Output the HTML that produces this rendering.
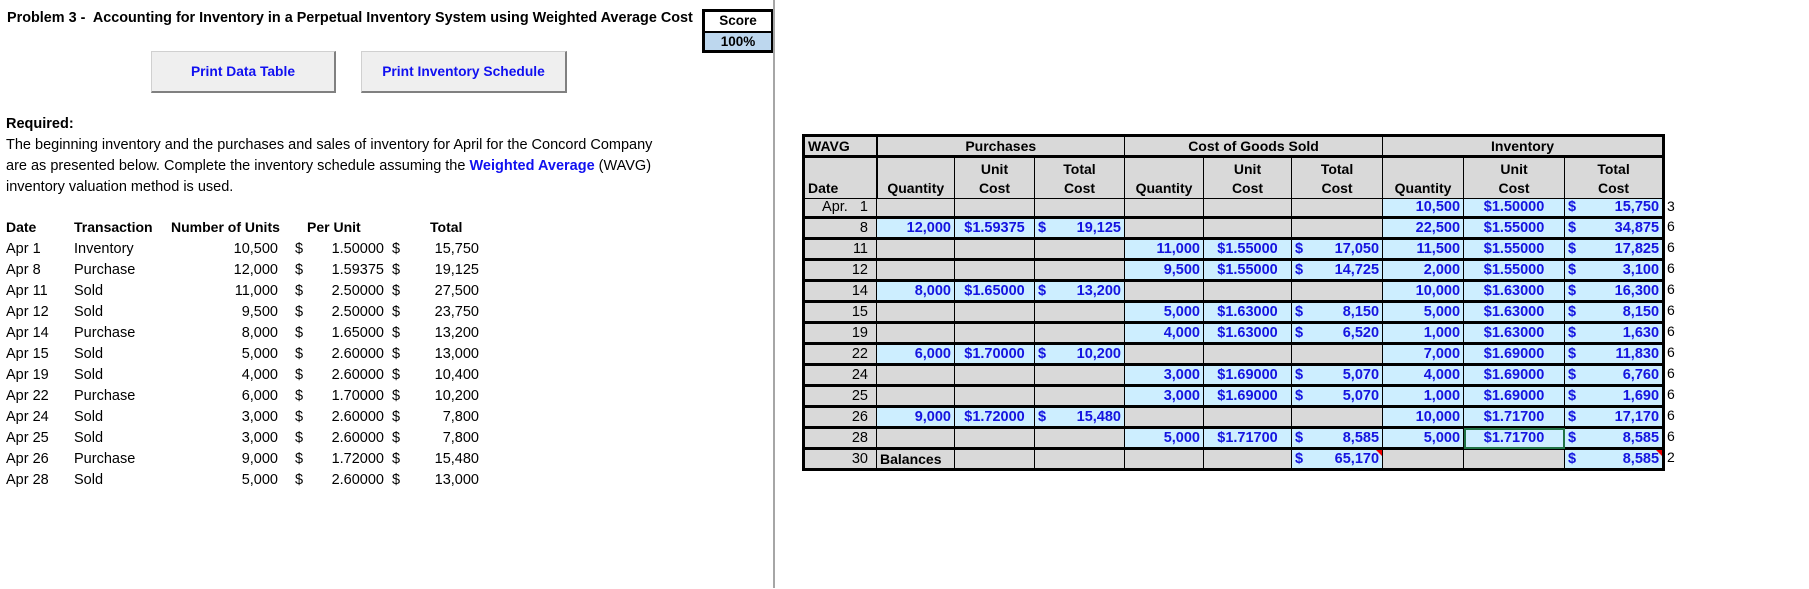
<!DOCTYPE html>
<html><head><meta charset="utf-8"><style>
*{margin:0;padding:0;box-sizing:border-box}
body{width:1809px;height:589px;background:#fff;position:relative;overflow:hidden;font-family:"Liberation Sans",Arial,sans-serif;color:#000}
.a{position:absolute;white-space:nowrap}
.title{left:7px;top:10px;font-size:14.4px;font-weight:bold}
.score{left:702px;top:9px;width:72px;height:44px;border:3px solid #000;font-size:13.5px;font-weight:bold;text-align:center}
.score div{height:19px;line-height:18px}
.score div+div{border-top:2px solid #000;background:#bdd7ee}
.vline{left:773px;top:0;width:2px;height:588px;background:#a6a6a6}
.btn{top:51px;height:42px;background:#efefef;border:1px solid #d0d0d0;border-right:2px solid #808080;border-bottom:2px solid #808080;color:#1010f0;font-weight:bold;font-size:13.8px;text-align:center;line-height:40px}
.req{left:6px;font-size:14.5px}
.dt{font-size:14.5px}
.dt.h{font-weight:bold;font-size:14px}
table{position:absolute;left:802px;top:134px;border-collapse:collapse;table-layout:fixed;width:860px;border:3px solid #000;font-size:14px}
td{border:1px solid #000;background:#d9d9d9;padding:0 3px;white-space:nowrap;overflow:hidden;position:relative;line-height:15px}
tr.t td{border-top:3px solid #000}
.hd td{font-weight:bold;text-align:center;vertical-align:bottom;font-size:14px;line-height:19px}
.hd1 td{vertical-align:middle;line-height:15px}
td.d{text-align:right;padding-right:8px;font-size:14.5px}
td.b{background:#cdeeff;color:#1414e0;font-weight:bold;text-align:right;font-size:14.5px}
td.c{text-align:center}
.dl{float:left}
.tri{position:absolute;right:0;top:0;width:0;height:0;border-left:6px solid transparent;border-top:6px solid #e00}
.sel{outline:2px solid #217346;outline-offset:-2px}
.rn{left:1667px;font-size:14px}
</style></head><body>
<div class="a title">Problem 3 -&nbsp; Accounting for Inventory in a Perpetual Inventory System using Weighted Average Cost</div>
<div class="a score"><div>Score</div><div>100%</div></div>
<div class="a vline"></div>
<div class="a btn" style="left:151px;width:185px">Print Data Table</div>
<div class="a btn" style="left:361px;width:206px">Print Inventory Schedule</div>
<div class="a req" style="top:116px;font-weight:bold">Required:</div>
<div class="a req" style="top:137px">The beginning inventory and the purchases and sales of inventory for April for the Concord Company</div>
<div class="a req" style="top:158px">are as presented below. Complete the inventory schedule assuming the <b style="color:#1010f0">Weighted Average</b> (WAVG)</div>
<div class="a req" style="top:179px">inventory valuation method is used.</div>

<div class="a dt h" style="left:6px;top:219px">Date</div>
<div class="a dt h" style="left:74px;top:219px">Transaction</div>
<div class="a dt h" style="left:171px;top:219px">Number of Units</div>
<div class="a dt h" style="left:307px;top:219px">Per Unit</div>
<div class="a dt h" style="left:430px;top:219px">Total</div>

<table>
<colgroup><col style="width:73px"><col style="width:78px"><col style="width:80px"><col style="width:90px"><col style="width:79px"><col style="width:88px"><col style="width:91px"><col style="width:81px"><col style="width:101px"><col style="width:99px"></colgroup>
<tr class="hd hd1" style="height:21px"><td style="text-align:left;border-right:2px solid #000">WAVG</td><td colspan="3">Purchases</td><td colspan="3">Cost of Goods Sold</td><td colspan="3">Inventory</td></tr>
<tr class="hd t" style="height:42px"><td style="text-align:left;border-right:2px solid #000">Date</td><td>Quantity</td><td>Unit<br>Cost</td><td>Total<br>Cost</td><td>Quantity</td><td>Unit<br>Cost</td><td>Total<br>Cost</td><td>Quantity</td><td>Unit<br>Cost</td><td>Total<br>Cost</td></tr>
<tr style="height:19px"><td class="d">Apr.&nbsp;&nbsp;&nbsp;1</td><td></td><td></td><td></td><td></td><td></td><td></td><td class="b">10,500</td><td class="b c">$1.50000</td><td class="b"><span class="dl">$</span>15,750</td></tr>
<tr class="t" style="height:21px"><td class="d">8</td><td class="b">12,000</td><td class="b c">$1.59375</td><td class="b"><span class="dl">$</span>19,125</td><td></td><td></td><td></td><td class="b">22,500</td><td class="b c">$1.55000</td><td class="b"><span class="dl">$</span>34,875</td></tr>
<tr class="t" style="height:21px"><td class="d">11</td><td></td><td></td><td></td><td class="b">11,000</td><td class="b c">$1.55000</td><td class="b"><span class="dl">$</span>17,050</td><td class="b">11,500</td><td class="b c">$1.55000</td><td class="b"><span class="dl">$</span>17,825</td></tr>
<tr class="t" style="height:21px"><td class="d">12</td><td></td><td></td><td></td><td class="b">9,500</td><td class="b c">$1.55000</td><td class="b"><span class="dl">$</span>14,725</td><td class="b">2,000</td><td class="b c">$1.55000</td><td class="b"><span class="dl">$</span>3,100</td></tr>
<tr class="t" style="height:21px"><td class="d">14</td><td class="b">8,000</td><td class="b c">$1.65000</td><td class="b"><span class="dl">$</span>13,200</td><td></td><td></td><td></td><td class="b">10,000</td><td class="b c">$1.63000</td><td class="b"><span class="dl">$</span>16,300</td></tr>
<tr class="t" style="height:21px"><td class="d">15</td><td></td><td></td><td></td><td class="b">5,000</td><td class="b c">$1.63000</td><td class="b"><span class="dl">$</span>8,150</td><td class="b">5,000</td><td class="b c">$1.63000</td><td class="b"><span class="dl">$</span>8,150</td></tr>
<tr class="t" style="height:21px"><td class="d">19</td><td></td><td></td><td></td><td class="b">4,000</td><td class="b c">$1.63000</td><td class="b"><span class="dl">$</span>6,520</td><td class="b">1,000</td><td class="b c">$1.63000</td><td class="b"><span class="dl">$</span>1,630</td></tr>
<tr class="t" style="height:21px"><td class="d">22</td><td class="b">6,000</td><td class="b c">$1.70000</td><td class="b"><span class="dl">$</span>10,200</td><td></td><td></td><td></td><td class="b">7,000</td><td class="b c">$1.69000</td><td class="b"><span class="dl">$</span>11,830</td></tr>
<tr class="t" style="height:21px"><td class="d">24</td><td></td><td></td><td></td><td class="b">3,000</td><td class="b c">$1.69000</td><td class="b"><span class="dl">$</span>5,070</td><td class="b">4,000</td><td class="b c">$1.69000</td><td class="b"><span class="dl">$</span>6,760</td></tr>
<tr class="t" style="height:21px"><td class="d">25</td><td></td><td></td><td></td><td class="b">3,000</td><td class="b c">$1.69000</td><td class="b"><span class="dl">$</span>5,070</td><td class="b">1,000</td><td class="b c">$1.69000</td><td class="b"><span class="dl">$</span>1,690</td></tr>
<tr class="t" style="height:21px"><td class="d">26</td><td class="b">9,000</td><td class="b c">$1.72000</td><td class="b"><span class="dl">$</span>15,480</td><td></td><td></td><td></td><td class="b">10,000</td><td class="b c">$1.71700</td><td class="b"><span class="dl">$</span>17,170</td></tr>
<tr class="t" style="height:21px"><td class="d">28</td><td></td><td></td><td></td><td class="b">5,000</td><td class="b c">$1.71700</td><td class="b"><span class="dl">$</span>8,585</td><td class="b">5,000</td><td class="b c sel">$1.71700</td><td class="b"><span class="dl">$</span>8,585</td></tr>
<tr class="t" style="height:21px"><td class="d">30</td><td style="font-weight:bold;font-size:14px">Balances</td><td></td><td></td><td></td><td></td><td class="b"><span class="dl">$</span>65,170<span class="tri"></span></td><td></td><td></td><td class="b"><span class="dl">$</span>8,585<span class="tri"></span></td></tr>
</table>

<div class="a rn" style="top:198px">3</div>
<div class="a rn" style="top:218px">6</div>
<div class="a rn" style="top:239px">6</div>
<div class="a rn" style="top:260px">6</div>
<div class="a rn" style="top:281px">6</div>
<div class="a rn" style="top:302px">6</div>
<div class="a rn" style="top:323px">6</div>
<div class="a rn" style="top:344px">6</div>
<div class="a rn" style="top:365px">6</div>
<div class="a rn" style="top:386px">6</div>
<div class="a rn" style="top:407px">6</div>
<div class="a rn" style="top:428px">6</div>
<div class="a rn" style="top:449px">2</div>

<div class="a dt" style="left:6px;top:239px;line-height:21px">Apr 1<br>Apr 8<br>Apr 11<br>Apr 12<br>Apr 14<br>Apr 15<br>Apr 19<br>Apr 22<br>Apr 24<br>Apr 25<br>Apr 26<br>Apr 28</div>
<div class="a dt" style="left:74px;top:239px;line-height:21px">Inventory<br>Purchase<br>Sold<br>Sold<br>Purchase<br>Sold<br>Sold<br>Purchase<br>Sold<br>Sold<br>Purchase<br>Sold</div>
<div class="a dt" style="right:1531px;top:239px;line-height:21px;text-align:right">10,500<br>12,000<br>11,000<br>9,500<br>8,000<br>5,000<br>4,000<br>6,000<br>3,000<br>3,000<br>9,000<br>5,000</div>
<div class="a dt" style="left:295px;top:239px;line-height:21px">$<br>$<br>$<br>$<br>$<br>$<br>$<br>$<br>$<br>$<br>$<br>$</div>
<div class="a dt" style="right:1425px;top:239px;line-height:21px;text-align:right">1.50000<br>1.59375<br>2.50000<br>2.50000<br>1.65000<br>2.60000<br>2.60000<br>1.70000<br>2.60000<br>2.60000<br>1.72000<br>2.60000</div>
<div class="a dt" style="left:392px;top:239px;line-height:21px">$<br>$<br>$<br>$<br>$<br>$<br>$<br>$<br>$<br>$<br>$<br>$</div>
<div class="a dt" style="right:1330px;top:239px;line-height:21px;text-align:right">15,750<br>19,125<br>27,500<br>23,750<br>13,200<br>13,000<br>10,400<br>10,200<br>7,800<br>7,800<br>15,480<br>13,000</div>
</body></html>
